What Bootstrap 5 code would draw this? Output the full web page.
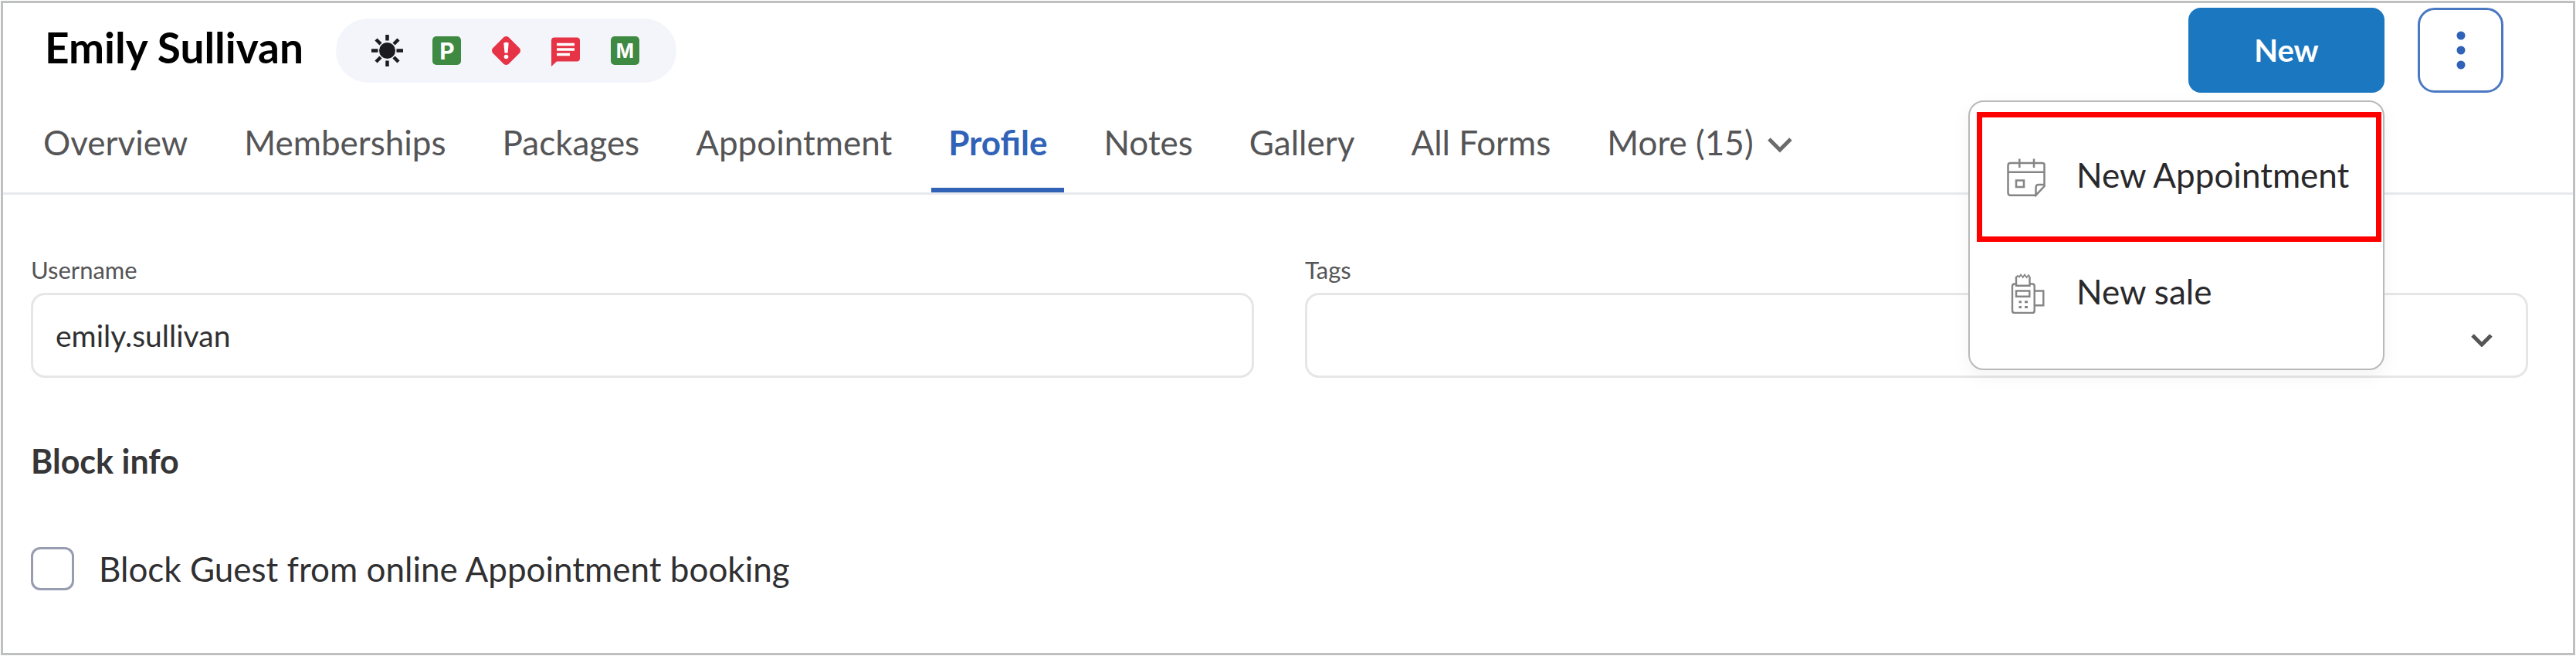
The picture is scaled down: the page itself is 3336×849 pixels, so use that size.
<!DOCTYPE html>
<html lang="en">
<head>
<meta charset="utf-8">
<meta name="viewport" content="width=device-width, initial-scale=1">
<title>Emily Sullivan - Profile</title>
<link rel="stylesheet" href="https://cdn.jsdelivr.net/npm/bootstrap@5.3.0/dist/css/bootstrap.min.css">
<style>
body{font-family:Lato,"Open Sans",sans-serif;font-size:44px;line-height:56px;color:#303032;background:#fff;padding:1px}
.app-frame{border:3px solid #bfc1c0;min-height:calc(100vh - 2px)}
.guest-header{border-bottom:3px solid #e8e9ee}
.guest-top{padding:6px 90px 0 54px}
.guest-name{font-size:55px;line-height:60px;font-weight:700;color:#000;margin:0 42px 8px 0}
.flag-pill{background:#f3f5fb;border-radius:42px;padding:21px 46px;gap:36px}
.flag-pill svg{width:41px;height:41px;display:block}
.flag-pill text{font-family:Inter,Roboto,sans-serif;font-weight:700;fill:#fff;text-anchor:middle}
.action-group{gap:43px}
.btn-new,.btn-new:hover{width:254px;height:110px;border-radius:16px;background:#1b77c0;border:0;color:#fff;font-size:40px;line-height:56px;font-weight:700}
.btn-more{width:111px;height:110px;border-radius:22px;border:3px solid #4a78c2;color:#3062b8;padding:0}
.btn-more svg{width:12px;height:50px;display:block;margin:auto}
.guest-tabs{padding:0 30px;gap:29px}
.guest-tabs .nav-link{color:#555557;padding:36px 22px 31px;border-bottom:6px solid transparent}
.guest-tabs .nav-link.active{color:#3062b8;font-weight:700;border-color:#3062b8}
.tab-caret{width:32px;height:20px;margin-left:18px}
.new-menu{right:0;top:120px;width:539px;padding:18px 0 25px;border:2px solid #b9b9b9;border-radius:20px;font-size:inherit;box-shadow:0 8px 24px rgba(0,0,0,.05)}
.new-menu .dropdown-item{position:relative;height:151px;padding:0 0 0 48px;gap:40px;color:#29292b}
.new-menu .dropdown-item svg{width:50px;height:58px;flex:none}
.new-menu .marked::after{content:"";position:absolute;inset:-5px 2px -12px 9px;border:7px solid #f00}
.profile-form{padding:77px 58px 77px 36px}
.field-pair{grid-template-columns:1fr 1fr;gap:66px}
.field-label{font-size:31px;line-height:40px;color:#555557;margin-bottom:10px;display:block}
.field-box{height:110px;border:3px solid #e6e6e6;border-radius:18px;font-size:39px;line-height:56px;color:#303032;padding:0 29px}
.tag-select{background-image:url("data:image/svg+xml,%3Csvg xmlns='http://www.w3.org/2000/svg' viewBox='0 0 28 18'%3E%3Cpath d='M2 3l12 12L26 3' fill='none' stroke='%23555' stroke-width='5'/%3E%3C/svg%3E");background-size:28px 18px;background-position:right 43px top 49px}
.block-title{font-size:43px;line-height:56px;font-weight:700;color:#363638;margin:80px 0 83px}
.block-check{gap:32px}
.block-check .form-check-input{width:56px;height:56px;margin:0;border:3px solid #979cb0;border-radius:12px;flex:none}
</style>
</head>
<body>
<div class="app-frame">
<header class="guest-header">
  <div class="guest-top d-flex align-items-center">
    <h1 class="guest-name">Emily Sullivan</h1>
    <div class="flag-pill d-flex align-items-center">
      <svg viewBox="0 0 41 41" role="img" aria-label="Sun"><circle cx="20.500" cy="20.500" r="10.500" fill="#1b1b20"/><path d="M20.500 0v7.500M20.500 33.500V41M0 20.500h8.500M32.500 20.500H41M6 6l6 6M29 29l6 6M35 6l-6 6M12 29l-6 6" stroke="#1b1b20" stroke-width="4.500"/></svg>
      <svg viewBox="0 0 41 41" role="img" aria-label="P"><rect x="2" y="2" width="37" height="37" rx="5" fill="#3f8a42"/><text x="21" y="32" font-size="30">P</text></svg>
      <svg viewBox="0 0 41 41" role="img" aria-label="Alert"><path d="M17.500 3Q20.500 1 23.500 3L38 17.500Q40 20.500 38 23.500L23.500 38Q20.500 40 17.500 38L3 23.500Q1 20.500 3 17.500Z" fill="#e63346"/><path d="M17.300 10.500Q20.500 9 23.700 10.500L22.500 23.500h-4Z" fill="#fff"/><circle cx="20.500" cy="28.500" r="2.800" fill="#fff"/></svg>
      <svg viewBox="0 0 41 41" role="img" aria-label="Comments"><path d="M6 3.500h29q4 0 4 4v23q0 4-4 4H9L2 41V7.500q0-4 4-4Z" fill="#e63346"/><path d="M9 12.500h23M9 19h23M9 25.500h17" stroke="#fff" stroke-width="3.500"/></svg>
      <svg viewBox="0 0 41 41" role="img" aria-label="M"><rect x="2" y="2" width="37" height="37" rx="5" fill="#3f8a42"/><text x="20.500" y="30" font-size="25">M</text></svg>
    </div>
    <div class="action-group d-flex ms-auto">
      <div class="dropdown position-relative">
        <button class="btn btn-new" type="button" aria-expanded="true">New</button>
        <div class="dropdown-menu new-menu show">
          <a class="dropdown-item marked d-flex align-items-center" href="#">
            <svg viewBox="0 -8 50 58" fill="none" stroke="#858585" stroke-width="2.500" aria-hidden="true"><path d="M37.500 47.700H4.500Q1.500 47.700 1.500 44.500V9Q1.500 6 4.500 6H46Q48.500 6 48.500 8.500V36L37.500 47.700V38Q37.500 34 41 34H48M1.500 17.700H48.500M16.300 .5V12M35 .5V12"/><path d="M12 28.500H22V37H12Z"/></svg>
            New Appointment</a>
          <a class="dropdown-item d-flex align-items-center" href="#">
            <svg viewBox="0 -8 50 58" fill="none" stroke="#858585" stroke-width="2.400" aria-hidden="true"><path d="M12 11.500H10Q7 11.500 7 14.500V46Q7 49 10 49H33Q35.700 49 35.700 46V14.500Q35.700 11.500 33 11.500H30M12 2.500V13.800H29.500V2.500M35.700 20.500H47.300V39.200H35.700M12 20.500H29.300V27.800H12Z"/><path d="M11 3.500L14 1L16 2.500L18-.5L20.700 3L23-.5L25.500 3L28 0L30 3.500" stroke-width="1.800"/><path d="M15.500 34.800h3.500M23 34.800h4M15.500 41.500h3.500M23 41.500h4" stroke-width="3"/></svg>
            New sale</a>
        </div>
      </div>
      <button class="btn btn-more" type="button" aria-label="More actions"><svg viewBox="0 0 12 50" fill="currentColor"><circle cx="6" cy="6" r="5.500"/><circle cx="6" cy="25" r="5.500"/><circle cx="6" cy="44" r="5.500"/></svg></button>
    </div>
  </div>
  <nav class="guest-tabs nav" aria-label="Guest sections">
    <a class="nav-link" href="#">Overview</a>
    <a class="nav-link" href="#">Memberships</a>
    <a class="nav-link" href="#">Packages</a>
    <a class="nav-link" href="#">Appointment</a>
    <a class="nav-link active" aria-current="page" href="#">Profile</a>
    <a class="nav-link" href="#">Notes</a>
    <a class="nav-link" href="#">Gallery</a>
    <a class="nav-link" href="#">All Forms</a>
    <a class="nav-link d-flex align-items-center" href="#">More (15)<svg class="tab-caret mt-2" viewBox="0 0 32 20" fill="none" stroke="#6b6b6b" stroke-width="5" aria-hidden="true"><path d="M2 2l14 14L30 2"/></svg></a>
  </nav>
</header>
<main>
  <form class="profile-form">
    <div class="field-pair d-grid">
      <div>
        <label class="field-label" for="username">Username</label>
        <input class="form-control field-box" id="username" type="text" value="emily.sullivan">
      </div>
      <div>
        <label class="field-label" for="tags">Tags</label>
        <select class="form-select field-box tag-select" id="tags"><option value=""></option></select>
      </div>
    </div>
    <h2 class="block-title">Block info</h2>
    <div class="block-check d-flex align-items-center">
      <input class="form-check-input" type="checkbox" id="blockGuest">
      <label for="blockGuest">Block Guest from online Appointment booking</label>
    </div>
  </form>
</main>
</div>
<script src="https://cdn.jsdelivr.net/npm/bootstrap@5.3.0/dist/js/bootstrap.bundle.min.js"></script>
</body>
</html>
